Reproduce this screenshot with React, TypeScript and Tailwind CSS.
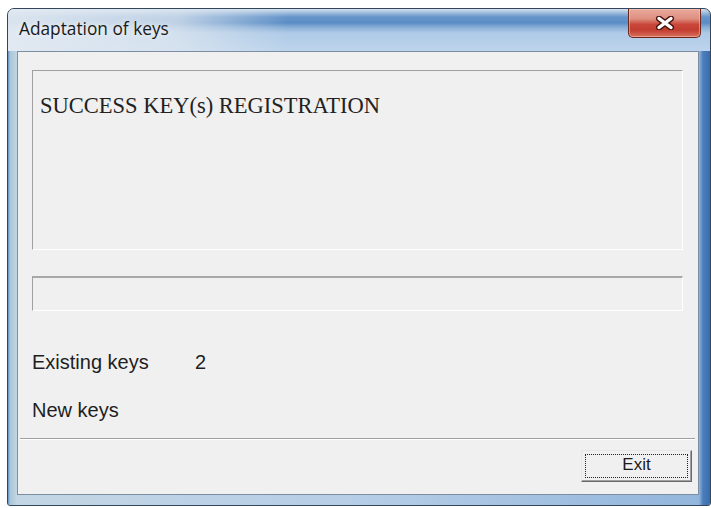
import React from "react";

function CloseGlyph() {
  return (
    <svg width="20" height="14" viewBox="0 0 20 14">
      <path d="M4 2.5 L16 11.5 M16 2.5 L4 11.5" stroke="#4a1710" strokeWidth="6" strokeLinecap="round" />
      <path d="M4 2.5 L16 11.5 M16 2.5 L4 11.5" stroke="#ffffff" strokeWidth="3.4" strokeLinecap="round" />
    </svg>
  );
}

export default function App() {
  return (
    <div className="w-[711px] h-[508px] bg-white pt-[8px] pl-[7px] overflow-hidden">
      <div className="w-[704px] h-[498px] flex flex-col border border-[#34465a] rounded-t-[7px] rounded-b-[3px] overflow-hidden bg-[linear-gradient(180deg,#d5e3f1_0px,#a9c4e0_3px,#6695ca_8px,#5a8dc6_14px,#86acd5_18px,#afcae7_24px,#bdd4ec_42px,#b4cde8_100%)]">
        {/* title bar */}
        <div className="h-[42px] flex items-start bg-[linear-gradient(90deg,rgba(228,235,242,0.92)_0px,rgba(222,231,240,0.75)_170px,rgba(220,230,240,0)_280px)]">
          <span className="ml-[11px] mt-[9px] text-[17.3px] leading-[22px] text-[#1a1a1a] font-['Open_Sans',sans-serif] [text-shadow:0_0_6px_#ffffff]">
            Adaptation of keys
          </span>
          <div className="ml-auto mr-[9px] w-[73px] h-[29px] flex items-center justify-center border border-t-0 border-[#6b271e] rounded-b-[5px] bg-[linear-gradient(180deg,#e9aa9c_0%,#de8f80_35%,#c9473a_55%,#c23d30_75%,#d8705e_100%)] shadow-[inset_0_0_0_1px_rgba(255,200,190,0.5)]">
            <CloseGlyph />
          </div>
        </div>

        {/* frame + client */}
        <div className="flex-1 flex pl-[9px] pr-[11px] pb-[10px] bg-[linear-gradient(90deg,#5f8fc3_0px,#a9c6d8_2px,#c3d6e4_9px,#b6cde6_50%,#93b6dc_691px,#4b7dbb_695px,#3c6cab_702px)]">
          <div className="flex-1 flex flex-col border border-[#7d8ea3] bg-[#f0f0f0]">
            <div className="mt-[18px] ml-[14px] mr-[15px] h-[180px] border border-t-[#a0a0a0] border-l-[#a0a0a0] border-b-white border-r-white pt-[24px] pl-[7px]">
              <p className="text-[22.5px] leading-[22px] text-[#222] font-['Liberation_Serif',serif]">
                SUCCESS KEY(s) REGISTRATION
              </p>
            </div>

            <div className="mt-[26px] ml-[14px] mr-[15px] h-[35px] border border-t-2 border-t-[#a8a8a8] border-l-[#a0a0a0] border-b-white border-r-white" />

            <div className="mt-[41px] ml-[14px] flex text-[20px] leading-[20px] text-[#1e1e1e] font-['Liberation_Sans',sans-serif]">
              <span className="w-[163px]">Existing keys</span>
              <span>2</span>
            </div>
            <div className="mt-[28px] ml-[14px] text-[20px] leading-[20px] text-[#1e1e1e] font-['Liberation_Sans',sans-serif]">
              New keys
            </div>

            <div className="mt-[18px] ml-[2px] mr-[3px] h-[2px] border-t border-t-[#a0a0a0] border-b border-b-white" />

            <div className="mt-[10px] mr-[6px] flex justify-end">
              <button className="w-[111px] h-[32px] flex p-[3px] border border-t-[#e6e6e6] border-l-[#e6e6e6] border-b-[#696969] border-r-[#696969] bg-[#f0f0f0] shadow-[inset_-1px_-1px_0_#a0a0a0]">
                <div className="flex-1 flex items-center justify-center border border-dotted border-[#222] text-[17px] leading-[20px] text-[#1a1a1a] font-['Liberation_Sans',sans-serif] pb-[2px]">
                  Exit
                </div>
              </button>
            </div>
          </div>
        </div>
      </div>
    </div>
  );
}
